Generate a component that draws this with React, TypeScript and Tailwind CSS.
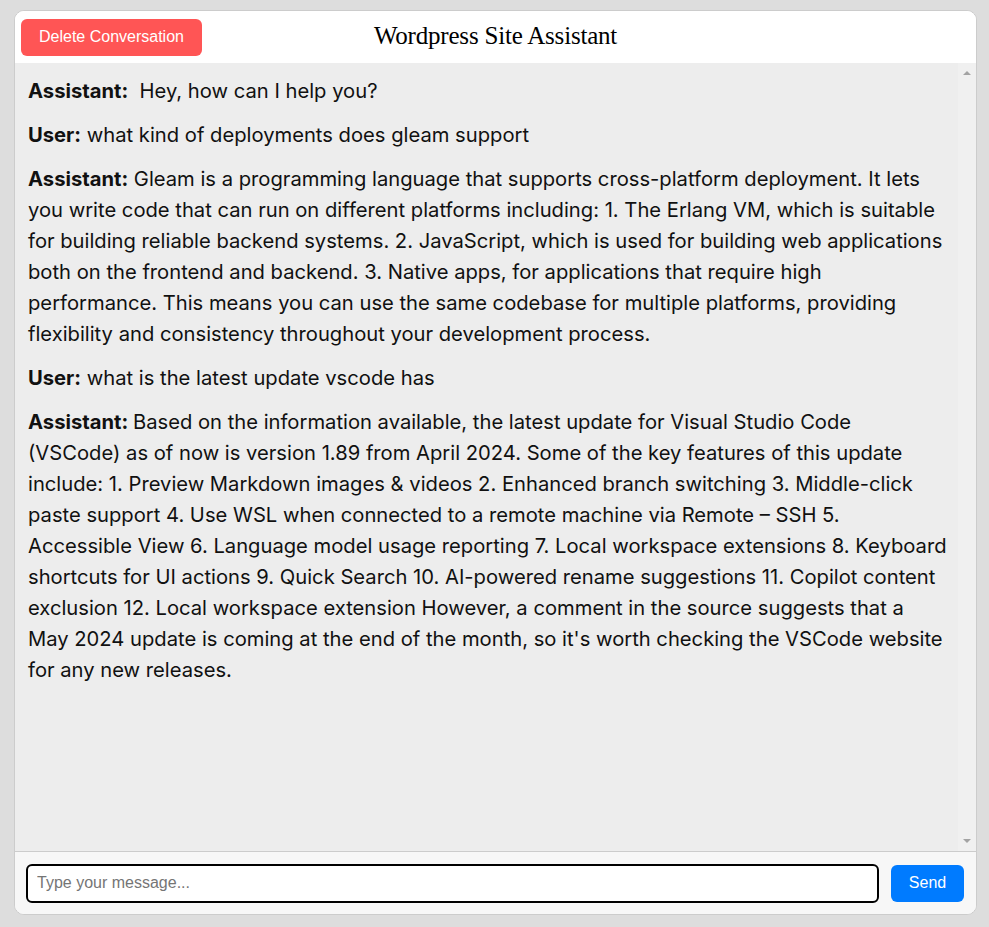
import React from 'react';

type Message = { role: 'Assistant' | 'User'; text: string | string[] };

const messages: Message[] = [
  { role: 'Assistant', text: '\u00a0Hey, how can I help you?' },
  { role: 'User', text: 'what kind of deployments does gleam support' },
  {
    role: 'Assistant',
    text: 'Gleam is a programming language that supports cross-platform deployment. It lets you write code that can run on different platforms including: 1. The Erlang VM, which is suitable for building reliable backend systems. 2. JavaScript, which is used for building web applications both on the frontend and backend. 3. Native apps, for applications that require high performance. This means you can use the same codebase for multiple platforms, providing flexibility and consistency throughout your development process.',
  },
  { role: 'User', text: 'what is the latest update vscode has' },
  {
    role: 'Assistant',
    // wrapped the same way the original page wraps it
    text: [
      'Based on the information available, the latest update for Visual Studio Code',
      '(VSCode) as of now is version 1.89 from April 2024. Some of the key features of this update',
      'include: 1. Preview Markdown images & videos 2. Enhanced branch switching 3. Middle-click',
      'paste support 4. Use WSL when connected to a remote machine via Remote \u2013 SSH 5.',
      'Accessible View 6. Language model usage reporting 7. Local workspace extensions 8. Keyboard',
      'shortcuts for UI actions 9. Quick Search 10. AI-powered rename suggestions 11. Copilot content',
      'exclusion 12. Local workspace extension However, a comment in the source suggests that a',
      "May 2024 update is coming at the end of the month, so it's worth checking the VSCode website",
      'for any new releases.',
    ],
  },
];

export default function App() {
  return (
    <div className="min-h-[927px] bg-[#dddddd] pl-[14px] pr-[12px] pt-[10px] pb-[12px]">
      <div className="flex h-[905px] flex-col overflow-hidden rounded-[10px] border border-[#cccccc] bg-white">
        <header className="grid h-[52px] shrink-0 grid-cols-[1fr_auto_1fr] items-center bg-white px-[6px]">
          <div>
            <button className="h-[37px] rounded-[6px] bg-[#ff5555] px-[18px] text-[16px] text-white font-['Liberation_Sans',Arial,sans-serif]">
              Delete Conversation
            </button>
          </div>
          <h1 className="mb-[2px] text-[25px] text-black font-['Liberation_Serif','Times_New_Roman',serif] tracking-[-0.2px]">
            Wordpress Site Assistant
          </h1>
          <div />
        </header>

        <div className="flex min-h-0 flex-1 bg-[#ededed]">
          <div className="flex-1 overflow-hidden px-[13px] pt-[12px] font-['Inter',sans-serif] text-[20.2px] leading-[31px] text-[#111111]">
            {messages.map((m, i) =>
              Array.isArray(m.text) ? (
                <p key={i} className="mb-[13px] whitespace-nowrap">
                  {m.text.map((line, j) => (
                    <span key={j} className="block">
                      {j === 0 && <span className="font-bold">{m.role}: </span>}
                      {line}
                    </span>
                  ))}
                </p>
              ) : (
                <p key={i} className="mb-[13px]">
                  <span className="font-bold">{m.role}:</span> {m.text}
                </p>
              )
            )}
          </div>
          <div className="flex w-[18px] shrink-0 flex-col items-center justify-between bg-[#f0f0f0] pt-[8px] pb-[8px]">
            <div className="h-0 w-0 border-x-[4px] border-b-[4px] border-x-transparent border-b-[#a3a3a3]" />
            <div className="h-0 w-0 border-x-[4px] border-t-[4px] border-x-transparent border-t-[#a3a3a3]" />
          </div>
        </div>

        <div className="flex h-[63px] shrink-0 items-center gap-[12px] border-t border-[#cccccc] bg-[#f7f7f7] pl-[11px] pr-[12px]">
          <input
            type="text"
            placeholder="Type your message..."
            className="h-[39px] flex-1 rounded-[6px] border-2 border-black bg-white px-[9px] text-[16px] font-['Liberation_Sans',Arial,sans-serif] text-black placeholder:text-[#757575] outline-none"
          />
          <button className="h-[37px] w-[73px] rounded-[6px] bg-[#007bff] text-[16px] text-white font-['Liberation_Sans',Arial,sans-serif]">
            Send
          </button>
        </div>
      </div>
    </div>
  );
}
